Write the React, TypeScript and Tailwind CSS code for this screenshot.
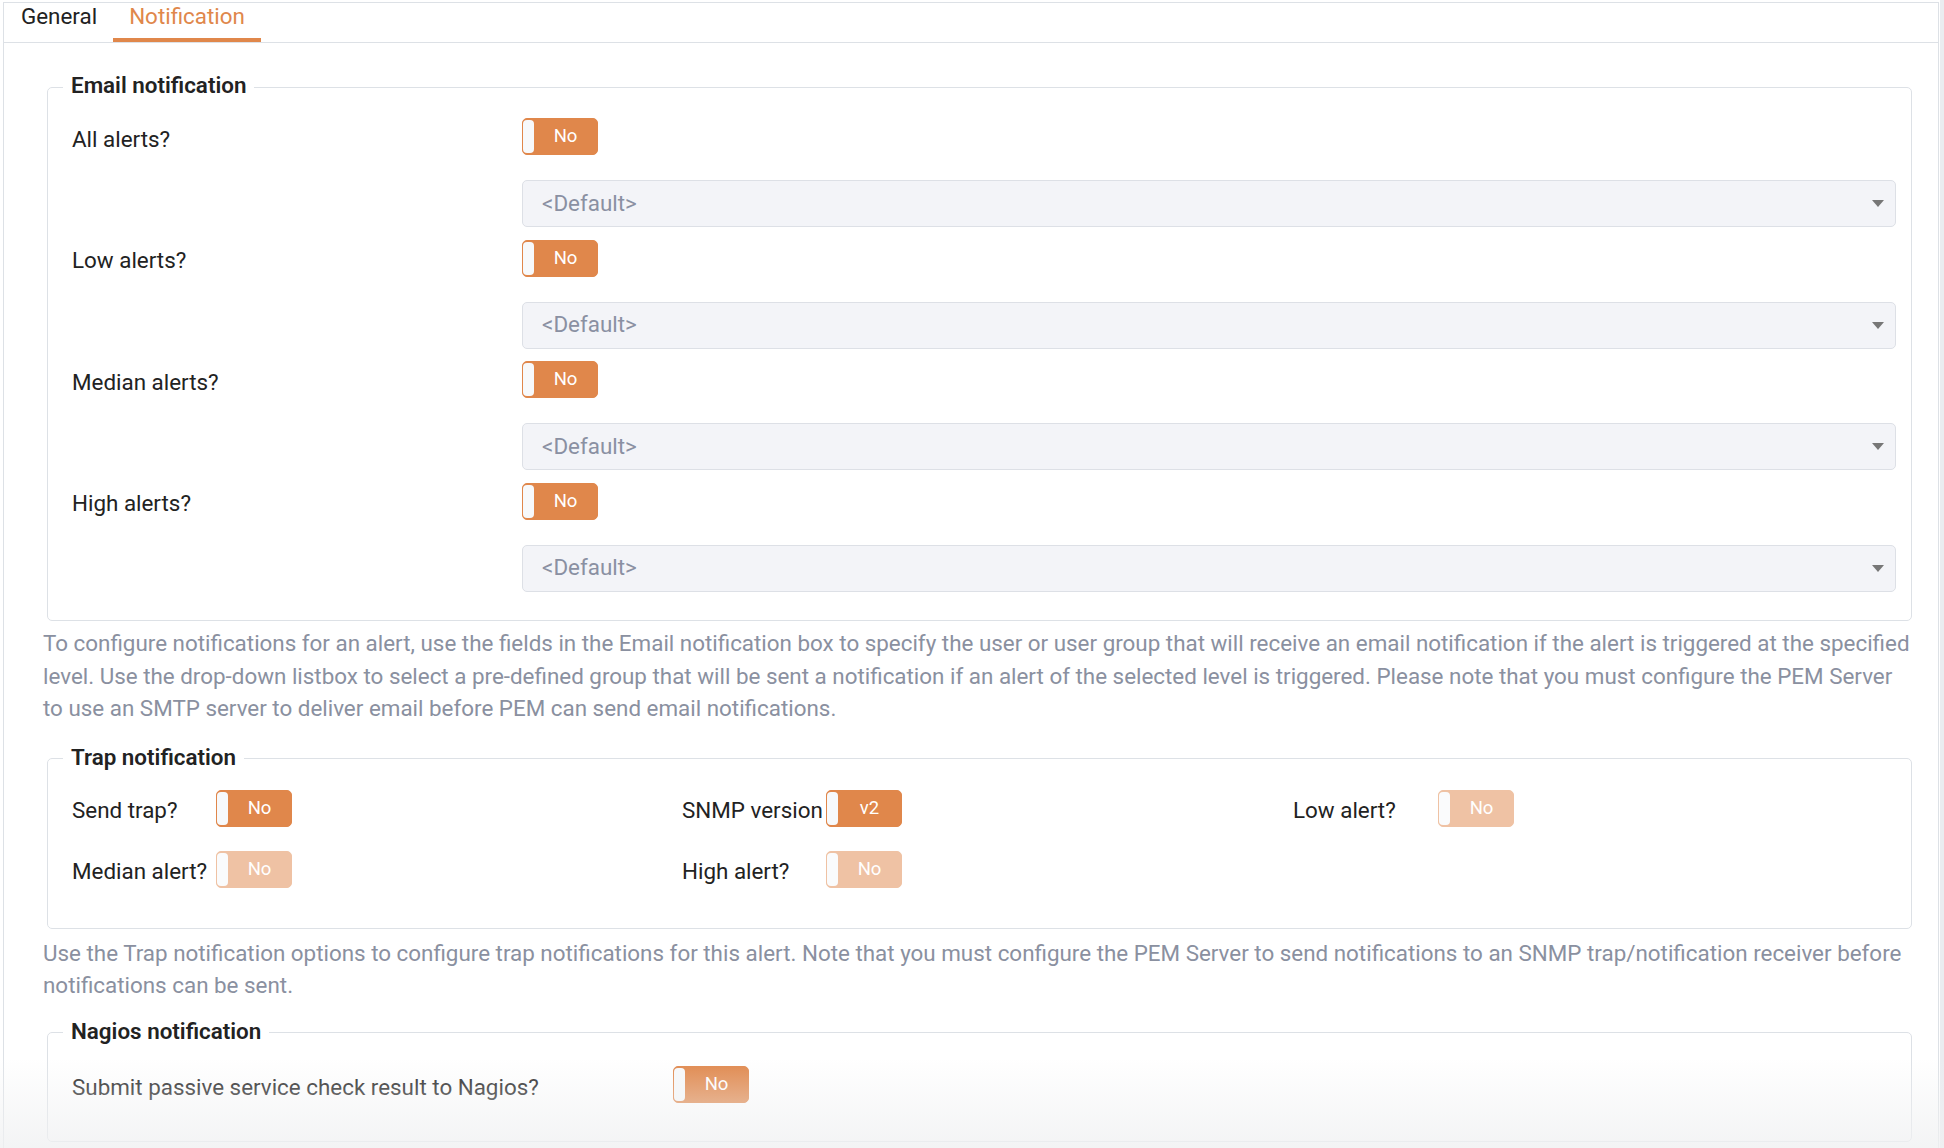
import React from 'react';

type ToggleProps = {
  text?: string;
  disabled?: boolean;
};

function Toggle({ text = 'No', disabled }: ToggleProps) {
  return (
    <div
      className={`flex h-[37px] w-[76px] shrink-0 rounded-[5px] border border-[#e0874b] bg-[#e0874b] py-[1px] ${
        disabled ? 'opacity-50' : ''
      }`}
    >
      <div className="h-full w-[11px] rounded-[4px] bg-[#f7f9fb]" />
      <span className="flex flex-1 items-center justify-center text-[18.5px] leading-none text-white">{text}</span>
    </div>
  );
}

function DefaultSelect() {
  return (
    <div className="flex h-[47px] items-center justify-between rounded-[5px] border border-[#dde0e6] bg-[#f3f4f8] pl-[19px] pr-[11px] text-[#8a90a2]">
      <span>&lt;Default&gt;</span>
      <svg width="12" height="7" viewBox="0 0 12 7">
        <path d="M0 0h12L6 7z" fill="#777" />
      </svg>
    </div>
  );
}

function Fieldset({ title, children }: { title: string; children: React.ReactNode }) {
  return (
    <fieldset className="ml-[4px] rounded-[5px] border border-[#dde1e6]">
      <legend className="ml-[15px] px-2 pb-[4px] font-semibold leading-[28px] text-[#222]">{title}</legend>
      {children}
    </fieldset>
  );
}

const emailAlerts = ['All alerts?', 'Low alerts?', 'Median alerts?', 'High alerts?'];

export default function App() {
  return (
    <div className="relative flex h-[1148px] w-[1944px] overflow-hidden bg-white font-['Roboto','Liberation_Sans',sans-serif] text-[22.4px] text-[#222]">
      <div className="ml-[3px] mt-[2px] flex w-[1936px] flex-col border-x border-t border-[#dde1e6]">
        {/* tabs */}
        <div className="flex h-[40px] shrink-0 border-b border-[#dde1e6] pl-[1px]">
          <div className="h-[39px] border-b-4 border-transparent px-4 leading-[27px]">General</div>
          <div className="h-[39px] border-b-4 border-[#e0874b] px-4 leading-[27px] text-[#e0874b]">Notification</div>
        </div>

        <div className="pl-[39px] pr-[26px] pt-[28px]">
          <Fieldset title="Email notification">
            <div className="pl-[24px] pr-[15px] pb-[16px] pt-[15px]">
              {emailAlerts.map((label) => (
                <div key={label}>
                  <div className="mb-[25px] flex h-[37px] items-center">
                    <span className="w-[450px] shrink-0 pt-[6px]">{label}</span>
                    <Toggle />
                  </div>
                  <div className="mb-[12.5px] ml-[450px]">
                    <DefaultSelect />
                  </div>
                </div>
              ))}
            </div>
          </Fieldset>

          <p className="mt-[6px] leading-[32.5px] text-[#8a90a0]">
            To configure notifications for an alert, use the fields in the Email notification box to specify the user or
            user group that will receive an email notification if the alert is triggered at the specified level. Use the
            drop-down listbox to select a pre-defined group that will be sent a notification if an alert of the selected
            level is triggered. Please note that you must configure the PEM Server to use an SMTP server to deliver email
            before PEM can send email notifications.
          </p>

          <div className="mt-[18px]">
            <Fieldset title="Trap notification">
              <div className="grid grid-cols-[610px_611px_1fr] gap-y-[24px] pb-[40px] pl-[24px] pr-[8px] pt-[15px]">
                <div className="flex h-[37px] items-center">
                  <span className="w-[144px] shrink-0 pt-[6px]">Send trap?</span>
                  <Toggle />
                </div>
                <div className="flex h-[37px] items-center">
                  <span className="w-[144px] shrink-0 whitespace-nowrap pt-[6px]">SNMP version</span>
                  <Toggle text="v2" />
                </div>
                <div className="flex h-[37px] items-center">
                  <span className="w-[145px] shrink-0 pt-[6px]">Low alert?</span>
                  <Toggle disabled />
                </div>
                <div className="flex h-[37px] items-center">
                  <span className="w-[144px] shrink-0 whitespace-nowrap pt-[6px]">Median alert?</span>
                  <Toggle disabled />
                </div>
                <div className="flex h-[37px] items-center">
                  <span className="w-[144px] shrink-0 pt-[6px]">High alert?</span>
                  <Toggle disabled />
                </div>
              </div>
            </Fieldset>
          </div>

          <p className="mt-[8px] leading-[32.5px] text-[#8a90a0]">
            Use the Trap notification options to configure trap notifications for this alert. Note that you must configure
            the PEM Server to send notifications to an SNMP trap/notification receiver before notifications can be sent.
          </p>

          <div className="mt-[15px]">
            <Fieldset title="Nagios notification">
              <div className="mb-[38px] mt-[17px] flex h-[37px] items-center pl-[24px]">
                <span className="w-[601px] shrink-0 pt-[7px]">Submit passive service check result to Nagios?</span>
                <Toggle />
              </div>
            </Fieldset>
          </div>
        </div>
      </div>
      <div className="ml-[1px] flex-1 bg-[#eaecf0]" />

      {/* fade at the bottom edge of the scroll area */}
      <div className="pointer-events-none absolute inset-x-0 bottom-0 h-[90px] bg-linear-to-b from-white/0 to-[#f0f1f2]/80" />
    </div>
  );
}
